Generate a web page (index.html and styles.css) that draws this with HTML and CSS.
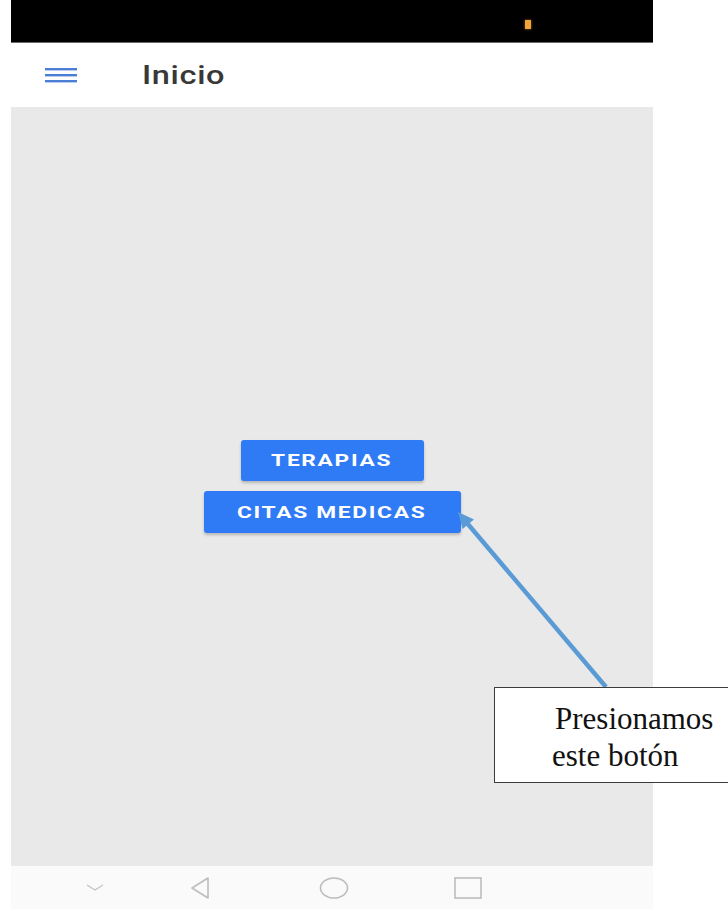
FILE: index.html
```html
<!DOCTYPE html>
<html lang="es">
<head>
  <meta charset="UTF-8">
  <title>Inicio</title>
  <meta name="viewport" content="width=device-width, initial-scale=1">
  <link rel="stylesheet" href="styles.css">
</head>
<body>
  <div class="phone">
    <div class="statusbar">
      <span class="led"></span>
    </div>

    <header class="appbar">
      <svg class="menu" width="32" height="16" viewBox="0 0 32 16">
        <rect x="0" y="1" width="32" height="2.4" fill="#4b7fd6"/>
        <rect x="0" y="7" width="32" height="2.4" fill="#4b7fd6"/>
        <rect x="0" y="13" width="32" height="2.4" fill="#4b7fd6"/>
      </svg>
      <h1 class="title"><span>Inicio</span></h1>
    </header>

    <main class="content">
      <button class="btn"><span>TERAPIAS</span></button>
      <button class="btn"><span>CITAS MEDICAS</span></button>
    </main>

    <nav class="navbar">
      <svg class="nav-icon hide" width="40" height="24" viewBox="0 0 40 24">
        <path d="M12 9 L20 14 L28 9" fill="none" stroke="#c4c4c4" stroke-width="1.4"/>
      </svg>
      <svg class="nav-icon back" width="40" height="24" viewBox="0 0 40 24">
        <path d="M28 2 L12 12 L28 22 Z" fill="none" stroke="#bdbdbd" stroke-width="1.6" stroke-linejoin="round"/>
      </svg>
      <svg class="nav-icon home" width="40" height="24" viewBox="0 0 40 24">
        <ellipse cx="20" cy="12" rx="13.5" ry="10" fill="none" stroke="#bdbdbd" stroke-width="1.6"/>
      </svg>
      <svg class="nav-icon recent" width="40" height="24" viewBox="0 0 40 24">
        <rect x="7" y="2" width="26" height="20" fill="none" stroke="#bdbdbd" stroke-width="1.6"/>
      </svg>
    </nav>
  </div>

  <!-- anotación sobre la captura -->
  <svg class="arrow" width="728" height="909" viewBox="0 0 728 909">
    <line x1="606" y1="687" x2="467" y2="523" stroke="#5b9bd5" stroke-width="4.5"/>
    <polygon points="458,512 462.6,529 474,519.5" fill="#5b9bd5"/>
  </svg>

  <div class="callout">
    <p class="first">Presionamos</p>
    <p>este botón</p>
  </div>
</body>
</html>
```

FILE: styles.css
```css
body {
  margin: 0; padding: 0;
  background: #fff;
  font-family: Roboto, "Liberation Sans", sans-serif;
  width: 728px; height: 909px;
  position: relative; overflow: hidden;
}
.phone {
  margin-left: 11px; width: 642px;
  display: flex; flex-direction: column;
}
.statusbar {
  height: 42px; background: #000;
  border-bottom: 1px solid #6a6a6a;
  position: relative;
}
.led {
  position: absolute; left: 514px; top: 20px;
  width: 6px; height: 9px; background: #f2a33a;
  box-shadow: 0 0 3px rgba(242,163,58,0.6);
}
.appbar {
  height: 64px; background: #fff;
  display: flex; align-items: center;
  padding-left: 34px;
}
.menu { display: block; }
.title {
  margin: 0 0 0 65px;
  font-size: 25px; font-weight: 500; color: #383838;
  letter-spacing: .5px;
}
.title span { display: inline-block; transform: scaleX(1.3); transform-origin: left center; }
.content {
  height: 759px; background: #e9e9e9;
  display: flex; flex-direction: column; align-items: center; justify-content: center;
  gap: 10px;
}
.btn {
  background: #2f7bf5; color: #fff;
  border: none; border-radius: 3px;
  height: 41px; padding: 0;
  box-shadow: 0 2px 3px rgba(0,0,0,0.22);
  font-family: Roboto, "Liberation Sans", sans-serif;
  font-size: 16px; font-weight: 700; letter-spacing: 1.2px;
}
.btn:first-child { width: 183px; }
.btn:last-child { width: 257px; height: 42px; }
.btn span { display: inline-block; transform: scaleX(1.42); }
.navbar {
  height: 43px; background: #fafafa;
  display: flex; align-items: center;
  padding-left: 64px;
}
.nav-icon { display: block; }
.back { margin-left: 65px; }
.home { margin-left: 94px; }
.recent { margin-left: 94px; }
.arrow { position: absolute; left: 0; top: 0; pointer-events: none; }
.callout {
  position: absolute; left: 494px; top: 687px;
  width: 260px; height: 96px;
  background: #fff; border: 1px solid #3c3c3c;
  padding: 12px 0 0 57px; box-sizing: border-box;
  font-family: "Liberation Serif", serif; font-size: 31px; color: #111;
}
.callout p { margin: 0; line-height: 37px; }
.callout .first { padding-left: 3px; }
```
